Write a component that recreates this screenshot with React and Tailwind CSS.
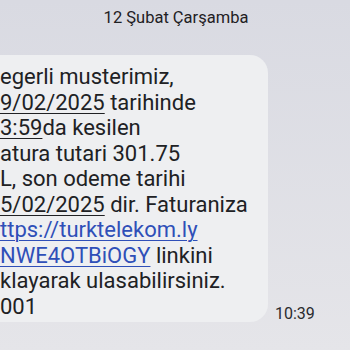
export default function App() {
  const u = "underline decoration-1 underline-offset-[3px]";
  const link = "text-[#2f4fb8] underline decoration-1 underline-offset-[3px]";
  return (
    <div className="w-[350px] h-[350px] overflow-hidden bg-gradient-to-b from-[#d9dae2] to-[#e5e5e9] font-['Roboto',sans-serif]">
      <div className="pt-[7px] pl-[2px] text-center text-[16.5px] leading-[22px] text-[#1f2023]">12 Şubat Çarşamba</div>
      <div className="mt-[26px] flex items-end">
        <div className="w-[268px] shrink-0 rounded-r-[18px] bg-[#eeeff1] pt-[9px] pb-[3px] text-[22px] leading-[25.5px] text-[#202124] whitespace-nowrap">
          <div>egerli musterimiz,</div>
          <div><span className={u}>9/02/2025</span> tarihinde</div>
          <div><span className={u}>3:59</span>da kesilen</div>
          <div>atura tutari 301.75</div>
          <div>L, son odeme tarihi</div>
          <div><span className={u}>5/02/2025</span> dir. Faturaniza</div>
          <div><span className={link}>ttps://turktelekom.ly</span></div>
          <div><span className={link}>NWE4OTBiOGY</span> linkini</div>
          <div>klayarak ulasabilirsiniz.</div>
          <div>001</div>
        </div>
        <div className="ml-[7px] mb-[-2px] text-[16px] leading-[20px] text-[#2a2b2e]">10:39</div>
      </div>
    </div>
  );
}
